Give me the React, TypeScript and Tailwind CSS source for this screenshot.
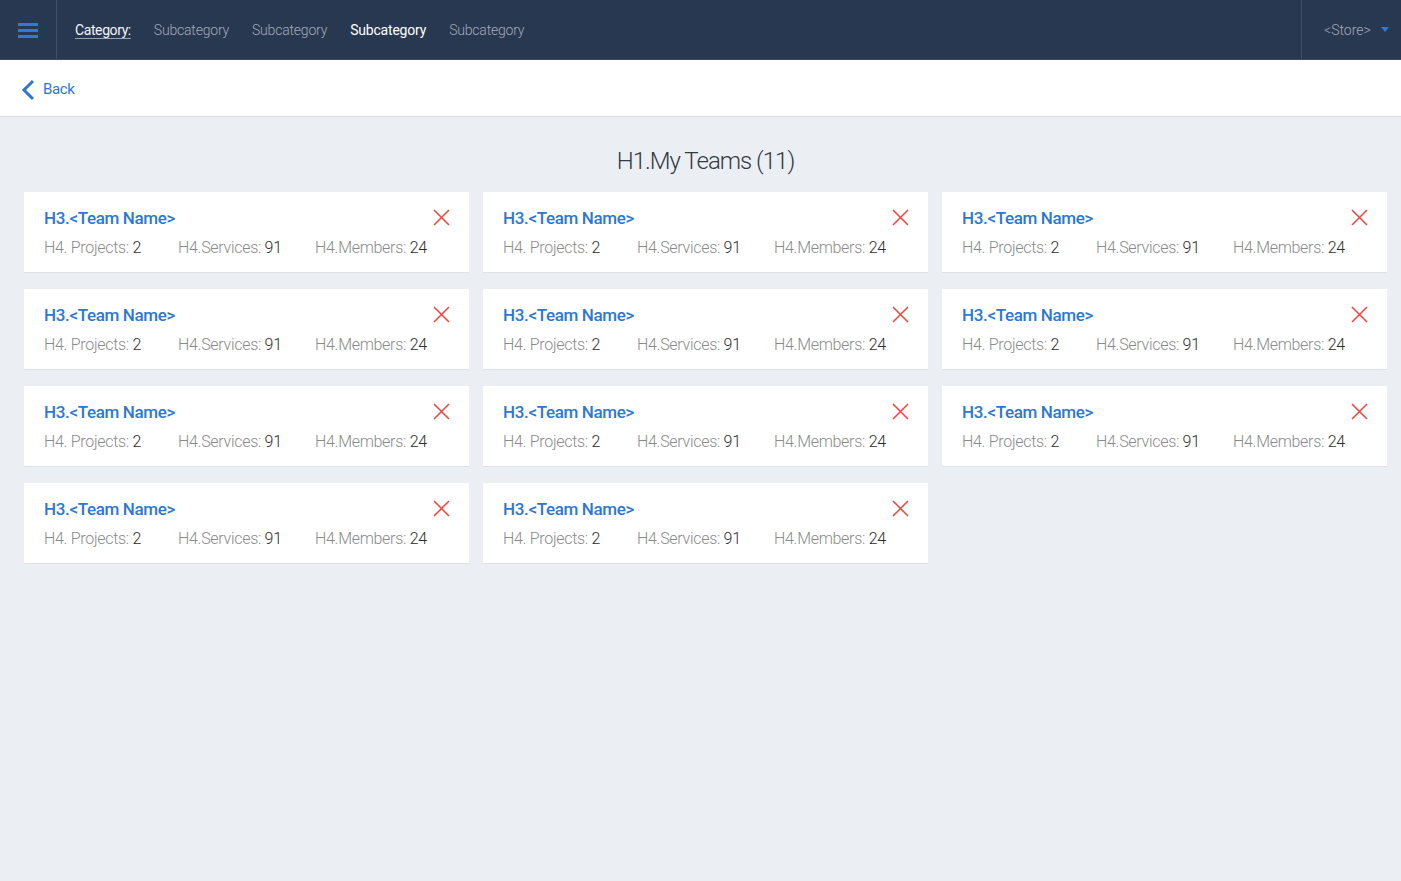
import React from 'react';

const teams = Array.from({ length: 11 }, (_, i) => ({
  id: i,
  name: 'H3.<Team Name>',
  projects: 2,
  services: 91,
  members: 24,
}));

const subcategories = ['Subcategory', 'Subcategory', 'Subcategory', 'Subcategory'];

const CloseIcon = () => (
  <svg width="17" height="17" viewBox="0 0 17 17" fill="none">
    <path d="M1 1L16 16M16 1L1 16" stroke="#f0433b" strokeWidth="1.5" />
  </svg>
);

const TeamCard = ({ team }: { team: (typeof teams)[number] }) => (
  <div className="bg-white h-[81px] pl-5 pr-[19px] pt-[15px] border-b border-[#dde2e9]">
    <div className="flex items-center justify-between">
      <h3 className="text-[17px] font-medium text-[#2b78d3] tracking-[-0.35px] leading-[22px]">{team.name}</h3>
      <button className="-mt-[1px]">
        <CloseIcon />
      </button>
    </div>
    <div className="flex gap-[34px] mt-[9px] text-[16px] font-light tracking-[-0.3px] leading-[20px]">
      <span className="text-[#8a8a8a] w-[100px] whitespace-nowrap">
        H4. Projects: <span className="text-[#2c2c2c]">{team.projects}</span>
      </span>
      <span className="text-[#8a8a8a] w-[103px] whitespace-nowrap">
        H4.Services: <span className="text-[#2c2c2c]">{team.services}</span>
      </span>
      <span className="text-[#8a8a8a] whitespace-nowrap">
        H4.Members: <span className="text-[#2c2c2c]">{team.members}</span>
      </span>
    </div>
  </div>
);

export default function App() {
  return (
    <div className="min-h-[881px] bg-[#ebeef3] font-['Roboto',sans-serif]">
      {/* top nav */}
      <header className="h-[60px] bg-[#283850] flex items-stretch border-b border-[#3a4a63]">
        <div className="w-[57px] flex items-center justify-center border-r border-[#3f5068] pt-[2px]">
          <div className="flex flex-col gap-[3px] w-[20px]">
            <span className="h-[3px] bg-[#2d7bd6]" />
            <span className="h-[3px] bg-[#2d7bd6]" />
            <span className="h-[3px] bg-[#2d7bd6]" />
          </div>
        </div>
        <nav className="flex items-center pl-[18px] pt-[2px] gap-[23px] text-[14px] tracking-[-0.2px]">
          <span className="text-[#f2f4f7] tracking-[-0.4px] underline underline-offset-[3px] decoration-[#9aa3b2]">Category:</span>
          {subcategories.map((s, i) => (
            <span key={i} className={i === 2 ? 'text-white' : 'text-[#a3abb9] font-light'}>
              {s}
            </span>
          ))}
        </nav>
        <div className="ml-auto w-[100px] border-l border-[#3f5068] flex items-center pl-[22px] pt-[1px] gap-[10px]">
          <span className="text-[#a3abb9] text-[14px] font-light">&lt;Store&gt;</span>
          <svg width="8" height="6" viewBox="0 0 8 6">
            <path d="M0 0H8L4 5Z" fill="#2d7bd6" />
          </svg>
        </div>
      </header>

      {/* back bar */}
      <div className="h-[57px] bg-white border-b border-[#d9dee6] flex items-center pl-[21px] pt-[3px] gap-[6px]">
        <svg width="16" height="22" viewBox="0 0 16 22" fill="none">
          <path d="M12 2L3 11L12 20" stroke="#2b78d3" strokeWidth="3" />
        </svg>
        <span className="text-[#2b78d3] text-[15px] tracking-[-0.4px]">Back</span>
      </div>

      {/* content */}
      <main className="pl-[24px] pr-[14px]">
        <h1 className="text-center text-[24px] font-light text-[#333a44] tracking-[-1px] pt-[27px] pb-[13px] leading-[35px]">
          H1.My Teams (11)
        </h1>
        <div className="grid grid-cols-3 gap-x-[14px] gap-y-[16px]">
          {teams.map((t) => (
            <TeamCard key={t.id} team={t} />
          ))}
        </div>
      </main>
    </div>
  );
}
